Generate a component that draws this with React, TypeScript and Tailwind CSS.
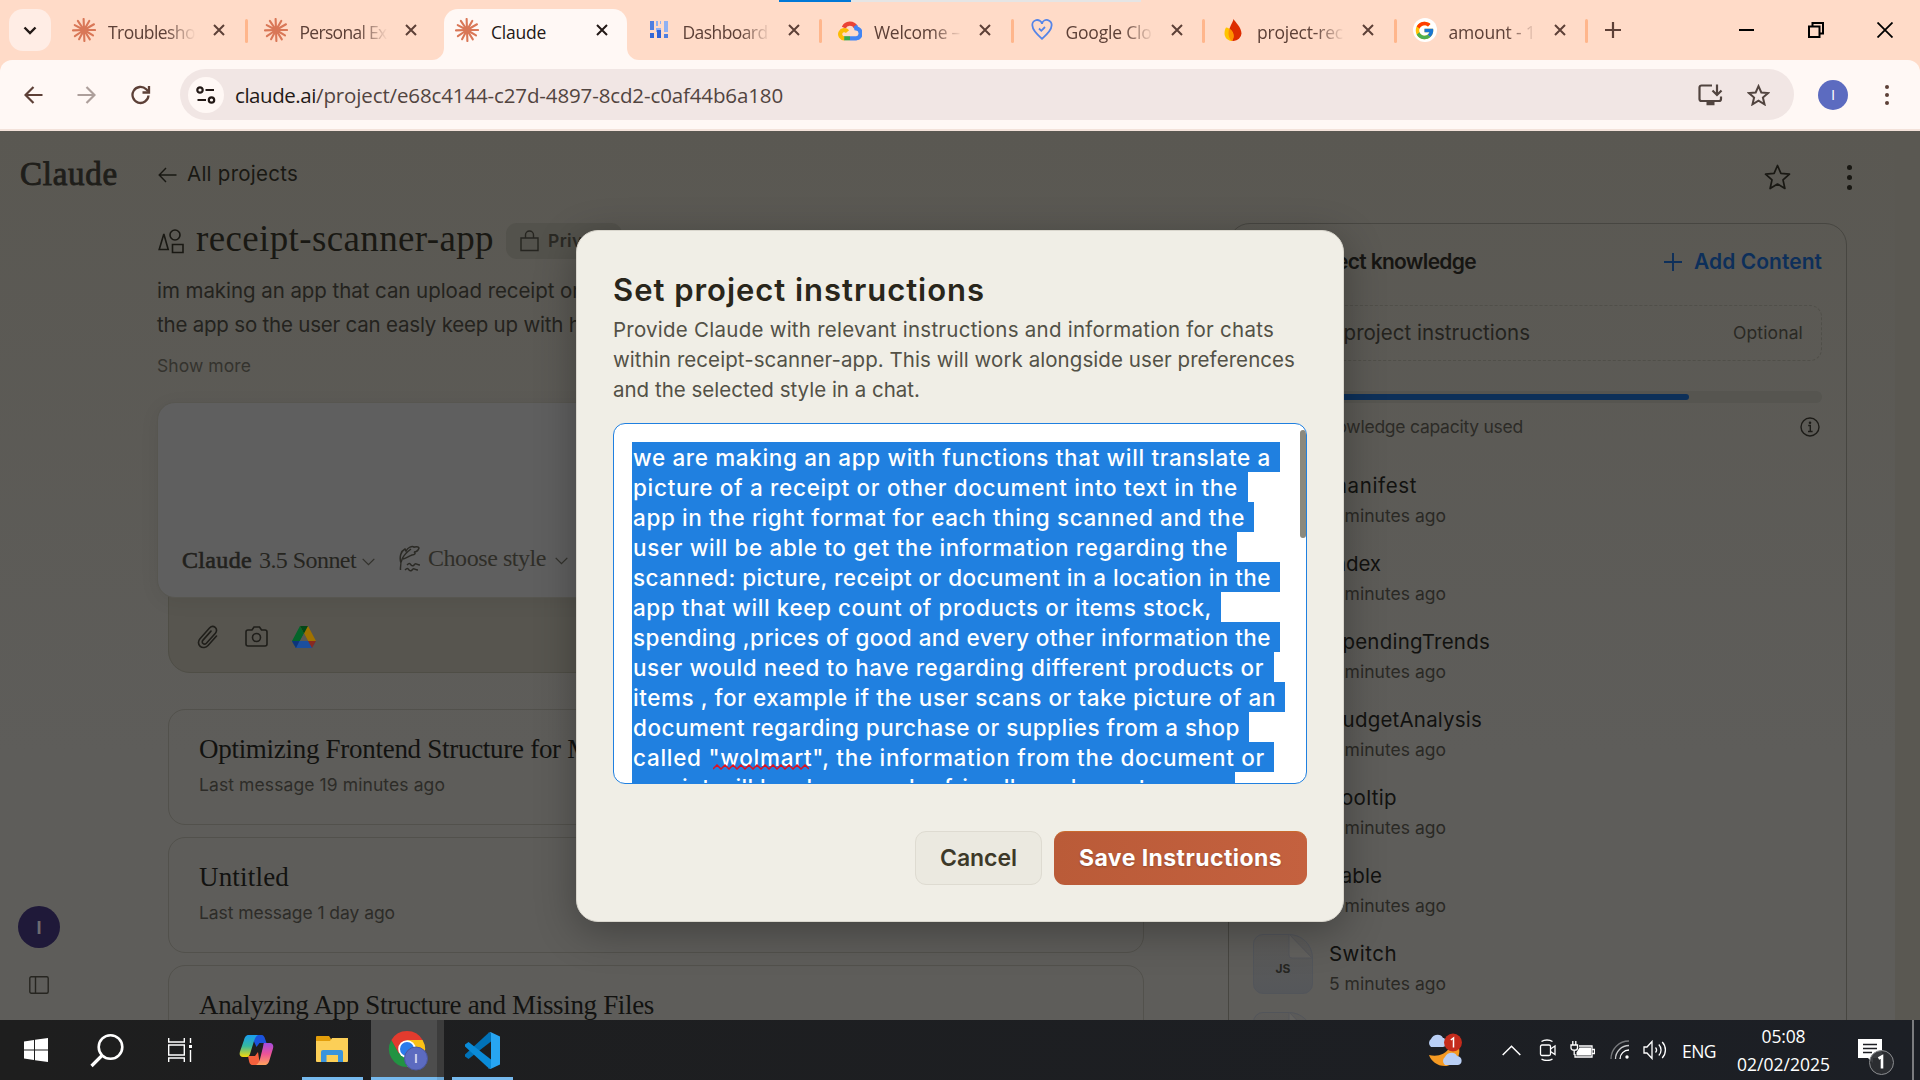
import React, { useLayoutEffect, useRef } from "react";
import { FcGoogle } from "react-icons/fc";

/* A single line of text whose tracking is adjusted so that it fills `w` pixels. */
function Fit({ w, c = "", children }: { w: number; c?: string; children: string }) {
  const ref = useRef<HTMLSpanElement>(null);
  useLayoutEffect(() => {
    const el = ref.current;
    if (!el) return;
    el.style.letterSpacing = "0px";
    const natural = el.getBoundingClientRect().width;
    el.style.letterSpacing = `${(w - natural) / children.length}px`;
  }, [w, children]);
  return (
    <span ref={ref} className={"inline-block whitespace-nowrap " + c}>
      {children}
    </span>
  );
}

const SERIF = "font-['Liberation_Serif',serif]";
const UI = "font-['Open_Sans','Noto_Sans',sans-serif]";

function Burst() {
  const rays = [
    [0, 11], [31, 10.5], [58, 11], [88, 11], [118, 10.5], [146, 11],
    [178, 11], [208, 10.5], [236, 11], [268, 11], [300, 10.5], [330, 11.5],
  ];
  return (
    <svg width="24" height="24" viewBox="-12 -12 24 24" stroke="#d97757" strokeWidth="2.1" strokeLinecap="round">
      {rays.map(([a, r]) => (
        <line key={a} x1="0" y1="0" x2={r * Math.cos((a * Math.PI) / 180)} y2={r * Math.sin((a * Math.PI) / 180)} />
      ))}
      <circle r="3.6" fill="#d97757" stroke="none" />
    </svg>
  );
}

function DashIcon() {
  return (
    <svg width="20" height="20" viewBox="0 0 20 20">
      <path d="M1 1h4v9H1z" fill="#4f7fe0" />
      <path d="M1 13h4v5H1z" fill="#3367d6" />
      <path d="M7 1h2v5H7zM11 1h1v3h-1zM7 8h5v4H7z" fill="#8fb1f3" />
      <path d="M8 10h4v8H8z" fill="#2f63d8" />
      <path d="M15 1h4v11h-4z" fill="#8fb1f3" />
      <path d="M15 14h4v4h-4z" fill="#4f7fe0" />
    </svg>
  );
}

function CloudIcon() {
  return (
    <svg width="25" height="21" viewBox="0 0 25 21" fill="none" strokeWidth="4.4">
      <path d="M6 7.500A7 7 0 0 1 18.500 7" stroke="#ea4335" />
      <path d="M17.800 5.600A7.500 7.500 0 0 1 19 8.300a5.200 5.200 0 0 1 .2 10.300H12.500" stroke="#4285f4" />
      <path d="M12.500 18.600H6.200" stroke="#34a853" />
      <path d="M6.500 18.600A4.300 4.300 0 1 1 9.900 11.600" stroke="#fbbc05" />
    </svg>
  );
}

function HeartIcon() {
  return (
    <svg width="22" height="22" viewBox="0 0 22 22" fill="none" stroke="#5585e8" strokeWidth="1.800">
      <path d="M11 19.800C5 14.500 1.500 10.800 1.500 7A4.800 4.800 0 0 1 11 4.800 4.800 4.800 0 0 1 20.500 7c0 3.800-3.500 7.500-9.500 12.800z" />
      <path d="M8 9.500l2.300 2.300L14 8" />
    </svg>
  );
}

function FireIcon() {
  return (
    <svg width="20" height="24" viewBox="0 0 20 24">
      <path d="M10.500 1C12 4 18.500 9 18.500 15.500a8 8 0 0 1-8 7.500C8 23 6 20 6 14c0-5 3.500-8.500 4.500-13z" fill="#dd2c00" />
      <path d="M3 9.500c4 .5 7.500 4 7.500 8.500 0 2.500-.8 4-2 5C4 22.500 1.500 19 1.500 15.500 1.500 13 2 11 3 9.500z" fill="#ffc400" />
      <path d="M6 10.800c3 1.400 4.600 4.200 4.600 7.200 0 2.200-.8 4-2 5C6.500 21 5.500 18 5.500 15z" fill="#ff9100" />
    </svg>
  );
}

function CloseX({ color }: { color: string }) {
  return (
    <svg width="12" height="12" viewBox="0 0 12 12" stroke={color} strokeWidth="2">
      <path d="M1 1l10 10M11 1L1 11" />
    </svg>
  );
}

const TABS: { icon: React.ReactNode; label: string; w: number; active?: boolean; sep?: boolean }[] = [
  { icon: <Burst />, label: "Troublesho", w: 87, sep: true },
  { icon: <Burst />, label: "Personal Ex", w: 87 },
  { icon: <Burst />, label: "Claude", w: 55, active: true },
  { icon: <DashIcon />, label: "Dashboard", w: 85, sep: true },
  { icon: <CloudIcon />, label: "Welcome –", w: 86, sep: true },
  { icon: <HeartIcon />, label: "Google Clo", w: 86, sep: true },
  { icon: <FireIcon />, label: "project-rec", w: 86, sep: true },
  {
    icon: (
      <span className="flex h-6 w-6 items-center justify-center rounded-full bg-white">
        <FcGoogle size={21} />
      </span>
    ),
    label: "amount - 1",
    w: 87,
    sep: true,
  },
];

function TabStrip() {
  return (
    <div className="relative flex h-[60px] bg-[#ffdbc8]">
      <div className="absolute left-[779px] top-0 flex h-0.5 w-[362px] bg-[#e5e5e5]">
        <div className="h-full w-[72px] bg-[#0078d7]" />
      </div>
      <div className="flex w-14 shrink-0 pl-[9px] pt-[9px]">
        <div className="flex h-[42px] w-[42px] items-center justify-center rounded-[14px] bg-[#ffede5]">
          <svg width="14" height="9" viewBox="0 0 14 9" fill="none" stroke="#231916" strokeWidth="2.400">
            <path d="M1.500 1.500L7 7l5.500-5.500" />
          </svg>
        </div>
      </div>
      {TABS.map((t) => (
        <div key={t.label} className="relative flex h-[60px] w-[191.5px] shrink-0">
          {t.active && (
            <div className="absolute bottom-0 left-[5px] h-[51px] w-[183px] rounded-t-[14px] bg-[#fff8f5]">
              <svg className="absolute -left-3 bottom-0" width="12" height="12">
                <path d="M12 0v12H0A12 12 0 0 0 12 0z" fill="#fff8f5" />
              </svg>
              <svg className="absolute -right-3 bottom-0" width="12" height="12">
                <path d="M0 0v12h12A12 12 0 0 1 0 0z" fill="#fff8f5" />
              </svg>
            </div>
          )}
          <div className="relative flex h-[60px] w-full items-center">
            <div className="ml-4 flex w-6 justify-center">{t.icon}</div>
            <div
              className={
                "ml-3 mt-[3px] w-[88px] overflow-hidden text-[17.500px] leading-6 " +
                UI +
                (t.active
                  ? " text-[#231916]"
                  : " text-[#5d4037] [mask-image:linear-gradient(to_right,black_65%,transparent_100%)]")
              }
            >
              <Fit w={t.w}>{t.label}</Fit>
            </div>
            <div className="ml-[17px]">
              <CloseX color={t.active ? "#231916" : "#5d4037"} />
            </div>
          </div>
          {t.sep && <div className="absolute right-0 top-[19px] h-6 w-[3px] rounded-full bg-[#ffb68c]" />}
        </div>
      ))}
      <div className="ml-[17px] flex items-center">
        <svg width="16" height="16" viewBox="0 0 16 16" stroke="#5d4037" strokeWidth="2.200">
          <path d="M8 0v16M0 8h16" />
        </svg>
      </div>
      <div className="ml-auto flex items-center pr-[27px]">
        <svg width="15" height="15" viewBox="0 0 15 15" stroke="#000" strokeWidth="2">
          <path d="M0 7h15" />
        </svg>
        <svg className="ml-[54px]" width="16" height="16" viewBox="0 0 16 16" fill="none" stroke="#000" strokeWidth="2">
          <path d="M1 4.500h10.500V15H1zM4.500 4V1H15v10.500h-3" />
        </svg>
        <svg className="ml-[53px]" width="16" height="16" viewBox="0 0 16 16" stroke="#000" strokeWidth="1.800">
          <path d="M.5.500l15 15M15.500.500l-15 15" />
        </svg>
      </div>
    </div>
  );
}

function Toolbar() {
  return (
    <div className="h-[71px] bg-[#ffdbc8]">
      <div className="flex h-[71px] items-center rounded-t-[12px] border-b-2 border-[#f3e2da] bg-[#fff8f5]">
        <svg className="ml-6" width="19" height="18" viewBox="0 0 19 18" fill="none" stroke="#5d4037" strokeWidth="2.200">
          <path d="M18.500 9H2M9.500 1L1.500 9l8 8" />
        </svg>
        <svg className="ml-[34px]" width="19" height="18" viewBox="0 0 19 18" fill="none" stroke="#ad9f9b" strokeWidth="2.200">
          <path d="M.5 9H17M9.500 1l8 8-8 8" />
        </svg>
        <svg className="ml-[35px]" width="20" height="20" viewBox="0 0 20 20" fill="none" stroke="#5d4037" strokeWidth="2.300">
          <path d="M17.500 10.500a8 8 0 1 1-2.300-6.200l2 2" />
          <path d="M18 1v6.500h-6.500" />
        </svg>
        <div className="ml-[29px] flex h-[51px] w-[1614px] items-center rounded-full bg-[#f1e6e4]">
          <div className="ml-2 flex h-9 w-9 items-center justify-center rounded-full bg-[#fff8f5]">
            <svg width="20" height="18" viewBox="0 0 20 18" fill="none" stroke="#231916" strokeWidth="2.200">
              <circle cx="4" cy="4" r="2.700" />
              <path d="M9.500 4H18M1.500 14H10" />
              <circle cx="15.500" cy="14" r="2.700" />
            </svg>
          </div>
          <div className={"ml-[11px] text-[20.500px] leading-7 " + UI}>
            <Fit w={81} c="text-[#231916]">claude.ai</Fit>
            <Fit w={467} c="text-[#51443f]">/project/e68c4144-c27d-4897-8cd2-c0af44b6a180</Fit>
          </div>
          <svg className="ml-auto" width="25" height="22" viewBox="0 0 25 22" fill="none" stroke="#51443f" strokeWidth="2.200">
            <path d="M14 1.500H3.500a2 2 0 0 0-2 2V15a2 2 0 0 0 2 2H21a2 2 0 0 0 2-2v-2.500" />
            <path d="M19 .5v10M14.500 6.500l4.500 4.500 4.500-4.500" />
            <path d="M8.500 19.500h8" strokeWidth="3.500" />
          </svg>
          <svg className="ml-[24px] mr-[24px]" width="23" height="22" viewBox="0 0 23 22" fill="none" stroke="#51443f" strokeWidth="2">
            <path d="M11.500 2.200l2.800 6.300 6.800.6-5.200 4.500 1.600 6.700-6-3.600-6 3.600 1.600-6.700L1.900 9.100l6.800-.6z" />
          </svg>
        </div>
        <div className={"ml-6 flex h-[30px] w-[30px] items-center justify-center rounded-full bg-[#5c6bc0] text-[15px] text-white " + UI}>I</div>
        <div className="ml-[37px] flex flex-col gap-1">
          <i className="h-1 w-1 rounded-full bg-[#5d4037]" />
          <i className="h-1 w-1 rounded-full bg-[#5d4037]" />
          <i className="h-1 w-1 rounded-full bg-[#5d4037]" />
        </div>
      </div>
    </div>
  );
}

const CHATS = [
  { title: "Optimizing Frontend Structure for M", tw: 392, sub: "Last message 19 minutes ago", sw: 246 },
  { title: "Untitled", tw: 90, sub: "Last message 1 day ago", sw: 196 },
  { title: "Analyzing App Structure and Missing Files", tw: 455, sub: "Last message 2 days ago", sw: 206 },
];

const FILES = [
  { name: "manifest", w: 88 },
  { name: "index", w: 52 },
  { name: "SpendingTrends", w: 161 },
  { name: "BudgetAnalysis", w: 153 },
  { name: "Tooltip", w: 68 },
  { name: "Table", w: 53 },
  { name: "Switch", w: 68 },
  { name: "Slider", w: 60 },
];

function Chevron({ c = "" }: { c?: string }) {
  return (
    <svg className={c} width="13" height="8" viewBox="0 0 13 8" fill="none" stroke="#33322d" strokeWidth="1.300">
      <path d="M.7.900l5.800 5.800L12.300.900" />
    </svg>
  );
}

function FileIcon() {
  return (
    <div className="relative flex h-[60px] w-[60px] shrink-0 items-center justify-center rounded-[10px] rounded-tr-[24px] border border-[#52555a] bg-gradient-to-b from-[#5c5b59] to-[#55575a]">
      <svg className="absolute -right-px -top-px" width="26" height="26" viewBox="0 0 26 26">
        <path d="M2 0v21a3 3 0 0 0 3 3h20z" fill="#62615e" stroke="#55565a" />
      </svg>
      <span className="mt-[9px] text-[12px] font-bold leading-none text-[#262622]">JS</span>
    </div>
  );
}

function MainColumn() {
  return (
    <div className="ml-[29px] w-[998px]">
      <div className="flex h-[87px] items-center">
        <svg className="ml-px" width="19" height="16" viewBox="0 0 19 16" fill="none" stroke="#191813" strokeWidth="1.400">
          <path d="M18.500 8H1.500M8 1L1.200 8 8 15" />
        </svg>
        <Fit w={111} c="ml-[10px] text-[20.500px] text-[#191813]">All projects</Fit>
      </div>
      <div className="mt-px flex h-[44px] items-center">
        <svg className="ml-px" width="26" height="26" viewBox="0 0 26 26" fill="none" stroke="#191813" strokeWidth="1.600">
          <path d="M5.700 6.500L1.200 21.500h9L6 6.500z" />
          <circle cx="17" cy="7" r="5" />
          <path d="M14.500 16.500h10.500v8H14.500z" />
        </svg>
        <Fit w={298} c={"ml-[12px] text-[37px] leading-[44px] text-[#191813] -mt-1 " + SERIF}>receipt-scanner-app</Fit>
        <div className="ml-3 flex h-9 w-[116px] items-center rounded-[11px] bg-[#53524c]">
          <svg className="ml-[14px]" width="19" height="22" viewBox="0 0 19 22" fill="none" stroke="#262520" strokeWidth="1.400">
            <path d="M1 8h17v12.500H1zM5.500 8V5a4 4 0 0 1 8 0v3" />
          </svg>
          <Fit w={62} c="ml-[9px] text-[17.500px] font-semibold text-[#2a2924]">Private</Fit>
        </div>
      </div>
      <div className="mt-[11px] text-[20.500px] leading-[34px] text-[#24231e]">
        <div><Fit w={423}>im making an app that can upload receipt or</Fit></div>
        <div><Fit w={439}>the app so the user can easly keep up with his</Fit></div>
      </div>
      <div className="mt-[12px] text-[17.500px] leading-6 text-[#34332e]">
        <Fit w={94}>Show more</Fit>
      </div>
      <div className="relative mt-[24px] flex h-[196px] flex-col justify-end rounded-[18px] border border-[#575650] bg-[#5f5f5f] shadow-[0_4px_20px_rgba(0,0,0,0.06)]">
        <div className={"mb-[22px] flex h-[34px] items-center pl-6 text-[24px] leading-[34px] " + SERIF}>
          <Fit w={70} c="mt-1 text-[#22211d] [-webkit-text-stroke:0.6px_#22211d]">Claude</Fit>
          <Fit w={97} c="ml-[7px] mt-1 text-[#26251f]">3.5 Sonnet</Fit>
          <Chevron c="ml-[6px] mt-[7px]" />
          <svg className="ml-[24px]" width="22" height="28" viewBox="0 0 22 28" fill="none" stroke="#2b2a25" strokeWidth="1.500">
            <path d="M1.500 26C1 16 4 11 12 5M2 19c-2-6 0-12 4-14l1 2c2-4 6-5 8-4-1 1 4-2 5 1-1 3-2 4-5 4 2 1 1 3-2 3-3 1-5 3-9 4M8 21c2-2 3-2 4 0 2 2 3 0 4-1s2 1 5 1M6 26c2-2 3-2 4 0 2 2 3 0 4-1s2 1 5 1" />
          </svg>
          <Fit w={118} c="ml-[7px] text-[#2f2e28]">Choose style</Fit>
          <Chevron c="ml-[9px] mt-[5px]" />
        </div>
      </div>
      <div className="ml-[11px] mt-[-12px] flex h-[87px] w-[976px] items-center rounded-b-[22px] border border-[#4f4e46] bg-[#57554f] pl-[28px] pt-[14px]">
        <svg width="21" height="24" viewBox="0 0 21 24" fill="none" stroke="#1f1e1a" strokeWidth="1.600" strokeLinecap="round">
          <path d="M19.500 11l-8.500 9.500c-2 2.200-5.500 2.800-7.800.8s-2.200-5.300-.2-7.500L12.500 3c1.600-1.700 4-2 5.700-.600s1.800 4 .2 5.800l-9 10c-1 1-2.400 1.200-3.400.3s-1-2.300 0-3.400l8-9" />
        </svg>
        <svg className="ml-[27px]" width="23" height="22" viewBox="0 0 23 22" fill="none" stroke="#1f1e1a" strokeWidth="1.600">
          <path d="M3 4h4l2-3h5.500l2 3H20a2 2 0 0 1 2 2v12a2 2 0 0 1-2 2H3a2 2 0 0 1-2-2V6a2 2 0 0 1 2-2z" />
          <circle cx="11.500" cy="11.500" r="4" />
        </svg>
        <svg className="ml-[24px]" width="24" height="22" viewBox="0 0 24 22">
          <path d="M8 0h8l8 15h-8z" fill="#a07200" />
          <path d="M8 0L0 15l4 7 8-14.500z" fill="#04652a" />
          <path d="M8 0h8l-4 7.500z" fill="#034718" />
          <path d="M0 15h24l-4 7H4z" fill="#1c4f9e" />
          <path d="M0 15h7.500L4 22z" fill="#0c357a" />
          <path d="M16 15h8l-4 7z" fill="#8a2a20" />
          <path d="M12 7.500L16 15H8z" fill="#5a5953" />
        </svg>
      </div>
      <div className="ml-[11px] mt-[36px] flex flex-col gap-3">
        {CHATS.map((c) => (
          <div key={c.title} className="h-[116px] w-[976px] shrink-0 rounded-[17px] border border-[#52514c] pl-[30px] pt-[22px]">
            <div className={"text-[27px] leading-[34px] text-[#121210] " + SERIF}>
              <Fit w={c.tw}>{c.title}</Fit>
            </div>
            <div className="mt-[7px] text-[17.500px] leading-6 text-[#2d2c28]">
              <Fit w={c.sw}>{c.sub}</Fit>
            </div>
          </div>
        ))}
      </div>
    </div>
  );
}

function SidePanel() {
  return (
    <div className="ml-[73px] w-[619px]">
      <div className="flex h-[92px] items-center justify-end">
        <svg width="27" height="27" viewBox="0 0 27 27" fill="none" stroke="#191813" strokeWidth="1.700" strokeLinejoin="round">
          <path d="M13.500 1.500l3.400 7.900 8.600.8-6.500 5.700 1.900 8.600-7.400-4.500-7.400 4.500L8 15.900 1.500 10.200l8.600-.8z" />
        </svg>
        <div className="ml-[56px] mr-[-5px] flex flex-col gap-[5px]">
          <i className="h-[5px] w-[5px] rounded-full bg-[#191813]" />
          <i className="h-[5px] w-[5px] rounded-full bg-[#191813]" />
          <i className="h-[5px] w-[5px] rounded-full bg-[#191813]" />
        </div>
      </div>
      <div className="h-[900px] rounded-[22px] border border-[#474641] px-6">
        <div className="mt-[23px] flex h-[30px] items-center justify-between">
          <Fit w={177} c="ml-[46px] text-[21px] font-semibold text-[#161512]">Project knowledge</Fit>
          <div className="flex items-center text-[#0d2f5a]">
            <svg width="18" height="18" viewBox="0 0 18 18" stroke="currentColor" strokeWidth="1.900">
              <path d="M9 0v18M0 9h18" />
            </svg>
            <Fit w={128} c="ml-3 text-[21px] font-semibold">Add Content</Fit>
          </div>
        </div>
        <div className="mt-[28px] flex h-[56px] items-center justify-between rounded-[12px] border border-dashed border-[#504f49] pl-[52px] pr-[18px]">
          <Fit w={224} c="text-[20.500px] text-[#24231e]">Set project instructions</Fit>
          <Fit w={70} c="text-[17.500px] text-[#2a2924]">Optional</Fit>
        </div>
        <div className="mt-[30px] flex h-3 items-center rounded-full bg-[#565550]">
          <div className="h-1.5 w-[436px] rounded-full bg-[#0d3059]" />
        </div>
        <div className="mt-[12px] flex h-6 items-center justify-between pr-0.5">
          <Fit w={206} c="ml-[64px] text-[17.500px] text-[#2c2b27]">knowledge capacity used</Fit>
          <svg width="20" height="20" viewBox="0 0 20 20" fill="none" stroke="#1d1c18" strokeWidth="1.400">
            <circle cx="10" cy="10" r="9" />
            <path d="M8.200 8.500H10.300V14.500M8 14.500h4.600" />
            <circle cx="10" cy="5.800" r=".6" fill="#1d1c18" />
          </svg>
        </div>
        <div className="mt-[27px] flex flex-col">
          {FILES.map((f) => (
            <div key={f.name} className="flex h-[78px] shrink-0">
              <FileIcon />
              <div className="ml-4 mt-[5px]">
                <div className="text-[20.500px] leading-[30px] text-[#121210]">
                  <Fit w={f.w}>{f.name}</Fit>
                </div>
                <div className="text-[17.500px] leading-[30px] text-[#2a2925]">
                  <Fit w={117}>5 minutes ago</Fit>
                </div>
              </div>
            </div>
          ))}
        </div>
      </div>
    </div>
  );
}

const LINES = [
  { t: "we are making an app with functions that will translate a", w: 638, s: 648 },
  { t: "picture of a receipt or other document into text in the", w: 605, s: 616 },
  { t: "app in the right format for each thing scanned and the", w: 612, s: 622 },
  { t: "user will be able to get the information regarding the", w: 595, s: 605 },
  { t: "scanned: picture, receipt or document in a location in the", w: 638, s: 648 },
  { t: "app that will keep count of products or items stock,", w: 579, s: 589 },
  { t: "spending ,prices of good and every other information the", w: 638, s: 648 },
  { t: "user would need to have regarding different products or", w: 631, s: 642 },
  { t: "items , for example if the user scans or take picture of an", w: 643, s: 653 },
  { t: "document regarding purchase or supplies from a shop", w: 607, s: 617 },
  { t: "called \"wolmart\", the information from the document or", w: 632, s: 642 },
  { t: "receipt will be shown under friendly and smart names", w: 593, s: 603 },
];

function Modal() {
  return (
    <div className="absolute left-[576px] top-[99px] h-[692px] w-[768px] rounded-[22px] border border-[#d9d6cd] bg-[#f0eee6] px-9 pt-[37px] shadow-[0_10px_40px_rgba(0,0,0,0.300)]">
      <div className="text-[31px] font-semibold leading-[44px] text-[#29261b]">
        <Fit w={372}>Set project instructions</Fit>
      </div>
      <div className="mt-[3px] text-[20.500px] leading-[30px] text-[#535146]">
        <div><Fit w={661}>Provide Claude with relevant instructions and information for chats</Fit></div>
        <div><Fit w={682}>within receipt-scanner-app. This will work alongside user preferences</Fit></div>
        <div><Fit w={307}>and the selected style in a chat.</Fit></div>
      </div>
      <div className="relative mt-[18px] h-[361px] w-[694px] overflow-hidden rounded-[12px] border border-[#2080e0] bg-white pl-[18px] pt-[18px]">
        {LINES.map((l) => (
          <div key={l.t} className="h-[30px] bg-[#2080e0] pl-px text-[22.500px] font-medium leading-[31px] text-white" style={{ width: l.s }}>
            <Fit w={l.w}>{l.t}</Fit>
          </div>
        ))}
        <svg className="absolute left-[99px] top-[340px]" width="96" height="6" fill="none" stroke="#e01020" strokeWidth="1.500">
          <path d="M0 5l4-4 4 4 4-4 4 4 4-4 4 4 4-4 4 4 4-4 4 4 4-4 4 4 4-4 4 4 4-4 4 4 4-4 4 4 4-4 4 4 4-4 4 4 4-4 4 4" />
        </svg>
        <div className="absolute right-0 top-[6px] h-[108px] w-[6px] rounded-full bg-[#8b897d]" />
      </div>
      <div className="mt-[47px] flex justify-end gap-3">
        <div className="flex h-[54px] w-[127px] items-center justify-center rounded-[11px] border border-[#dedbd1] bg-[#ebe9e0] text-[23px] font-semibold text-[#3d3929]">
          <Fit w={77}>Cancel</Fit>
        </div>
        <div className="flex h-[54px] w-[253px] items-center justify-center rounded-[11px] border-t border-[#c96a2e] bg-gradient-to-r from-[#ba5b38] to-[#c4613f] text-[23px] font-bold text-white [text-shadow:0_1px_2px_rgba(0,0,0,0.250)]">
          <Fit w={203}>Save Instructions</Fit>
        </div>
      </div>
    </div>
  );
}

function ClaudePage() {
  return (
    <div className="relative h-[889px] overflow-hidden bg-gradient-to-b from-[#5a5852] to-[#5e5d5a] to-70% font-['Inter',sans-serif]">
      <div className="absolute right-0 top-0 h-full w-[25px] bg-[#5a5852]" />
      <div className="flex h-full">
        <div className="flex w-[128px] shrink-0 flex-col">
          <div className="flex h-[88px] items-center pl-5">
            <Fit w={98} c={"text-[33px] text-[#1f1e1a] [-webkit-text-stroke:0.900px_#1f1e1a] " + SERIF}>Claude</Fit>
          </div>
          <div className="mt-auto flex flex-col items-center pb-[26px] pr-[50px]">
            <div className="flex h-[42px] w-[42px] items-center justify-center rounded-full bg-[#1f1939] text-[18px] font-bold text-[#6d6b70]">I</div>
            <svg className="mt-[28px]" width="20" height="18" viewBox="0 0 20 18" fill="none" stroke="#262520" strokeWidth="1.400">
              <rect x=".8" y=".8" width="18.400" height="16.400" rx="1.500" />
              <path d="M6.500 1v16" />
            </svg>
          </div>
        </div>
        <MainColumn />
        <SidePanel />
      </div>
      <Modal />
    </div>
  );
}

function Taskbar() {
  return (
    <div className={"flex h-[60px] bg-gradient-to-r from-[#1e1e1e] to-[#1c1f25] text-white " + UI}>
      <div className="flex w-[302px] shrink-0 items-center pl-6">
        <svg width="24" height="24" viewBox="0 0 24 24" fill="#fff">
          <path d="M0 3.400L10 2v9.500H0zM11 1.800L24 0v11.500H11zM0 12.500h10V22L0 20.600zM11 12.500h13V24l-13-1.800z" />
        </svg>
        <svg className="ml-[42px]" width="35" height="35" viewBox="0 0 35 35" fill="none" stroke="#fff" strokeWidth="2.600">
          <circle cx="20.500" cy="14" r="11.800" />
          <path d="M12 22.500L1.500 33" strokeWidth="3.200" />
        </svg>
        <svg className="ml-[43px]" width="25" height="24" viewBox="0 0 25 24" fill="none" stroke="#fff" strokeWidth="1.400">
          <path d="M.7 0v4h15.600V0M.7 7h15.600v10H.7zM.7 24v-4h15.600v4M22.500 0v5M22.500 12v12" />
          <path d="M21 7h3v3h-3z" fill="#fff" stroke="none" />
        </svg>
        <svg className="ml-[46px]" width="35" height="32" viewBox="0 0 35 32">
          <defs>
            <linearGradient id="cpA" x1="0" y1="0" x2="0" y2="1">
              <stop offset="0" stopColor="#1a9df0" />
              <stop offset=".5" stopColor="#35b8a0" />
              <stop offset="1" stopColor="#f5d90a" />
            </linearGradient>
            <linearGradient id="cpB" x1="0" y1="0" x2="0" y2="1">
              <stop offset="0" stopColor="#a34be0" />
              <stop offset=".5" stopColor="#ee5396" />
              <stop offset="1" stopColor="#ffa45c" />
            </linearGradient>
          </defs>
          <path d="M12 1h10c3 0 3.500 2 4.500 5l1 3h-7l-3 4z" fill="#1b53dc" />
          <path d="M9 22h7l3-4 2 13H14c-3 0-3.500-2-4-4z" fill="#f4603c" />
          <path d="M10 1h9c-2 1-3 3-4 6l-4 13c-1 2.500-2 3-4 3H4c-3 0-4-2-3-5.500L5 6c1-3.500 2-5 5-5z" fill="url(#cpA)" />
          <path d="M25 9h5c3.500 0 5 2 4 5.500L30.500 26c-1 3.500-2 5-5 5H17c2-1 3-3 4-6l3-12c.5-2.500.5-4 1-4z" fill="url(#cpB)" />
        </svg>
      </div>
      <div className="relative flex w-[61px] shrink-0 items-center justify-center border-b-[3px] border-[#76b9ed]">
        <svg width="33" height="28" viewBox="0 0 33 28">
          <path d="M0 2a1 1 0 0 1 1-1h12l2 3v4H0z" fill="#e39e0a" />
          <path d="M0 6h14l2-3h16v23a1 1 0 0 1-1 1H1a1 1 0 0 1-1-1z" fill="#fccf57" />
          <path d="M5 27V17a2 2 0 0 1 2-2h18a2 2 0 0 1 2 2v10h-5v-7H10.500v7z" fill="#3a94dc" />
        </svg>
      </div>
      <div className="ml-2 flex w-[66px] shrink-0 items-center justify-center border-b-[3px] border-[#76b9ed] bg-[#4d4d4d] pl-[7px] pt-[3px]">
        <svg width="40" height="42" viewBox="0 0 40 42">
          <path d="M19 11h15.600A18 18 0 0 1 19 38l7.800-13.500z" fill="#fbc116" />
          <path d="M3.400 11L11 24.500 26.800 24.500 19 38A18 18 0 0 1 3.400 11z" fill="#229342" />
          <path d="M3.400 11A18 18 0 0 1 34.600 11H19l-8 13.500z" fill="#e33b2e" />
          <circle cx="19" cy="20" r="8.800" fill="#fff" />
          <circle cx="19" cy="20" r="7" fill="#2a7bec" />
          <circle cx="28" cy="29.500" r="11.500" fill="#5c6bc0" stroke="#4b579f" />
          <path d="M28 25v9" stroke="#c6cbe8" strokeWidth="2.200" />
        </svg>
      </div>
      <div className="w-[7px] shrink-0 border-b-[3px] border-[#6aa6d4] bg-[#3c3c3c]" />
      <div className="ml-2 flex w-[61px] shrink-0 items-center justify-center border-b-[3px] border-[#76b9ed] pt-[3px]">
        <svg width="37" height="37" viewBox="0 0 37 37">
          <path d="M27 9.500L4.500 27 1 24.500v-2L25 .5l3 1z" fill="#0072b8" />
          <path d="M27 27.500L4.500 10 1 12.500v2l24 22 3-1z" fill="#0a8bd8" />
          <path d="M26.500 0L36 4.500v28L26.500 37c-1.500.3-2 0-2.500-.5 1.500.5 3-.3 3-1.500V2c0-1.500-1.500-2-3-1.500.5-.5 1.500-.8 2.500-.5z" fill="#27a5f2" />
        </svg>
      </div>
      <div className="ml-auto flex items-center">
        <svg width="37" height="35" viewBox="0 0 37 35">
          <path d="M3 22c8 2 16 0 21-8l9 1c2 9-5 18-14 18-8 0-14-5-16-11z" fill="#f59a23" />
          <path d="M5 14a5 5 0 0 1 0-8C7 1 15 0 17 5c4 0 5 9 0 9z" fill="#b9cff5" />
          <path d="M19 32a5 5 0 0 1 0-8c2-5 10-6 12-1 6 0 6 9 1 9z" fill="#b9cff5" />
          <circle cx="27" cy="9.500" r="9" fill="#c42b1c" />
          <path d="M24.800 7l2.700-2v9.500" stroke="#fff" strokeWidth="1.500" fill="none" />
        </svg>
        <svg className="ml-[39px]" width="19" height="11" viewBox="0 0 19 11" fill="none" stroke="#fff" strokeWidth="1.500">
          <path d="M.7 10L9.500 1.200 18.300 10" />
        </svg>
        <svg className="ml-[18px]" width="18" height="22" viewBox="0 0 18 22" fill="none" stroke="#fff" strokeWidth="1.300">
          <rect x="1.500" y="6" width="10" height="10.500" rx="1.500" />
          <path d="M11.500 10l4.500-3v8.500l-4.500-3M2.500 2.500c3-2 8-2 11 0M2.500 20c3 2 8 2 11 0" />
        </svg>
        <svg className="ml-[13px]" width="25" height="18" viewBox="0 0 25 18" fill="none" stroke="#fff" strokeWidth="1.300">
          <path d="M9 5h13v11H5v-3M22.500 8.500h2v4h-2" />
          <path d="M9.500 6.500H21v8H6.500v-3z" fill="#fff" stroke="none" />
          <path d="M1 4h6.500v3c0 3-6.500 3-6.500 0zM2.800 4V0M5.800 4V0M4.200 9v5" />
        </svg>
        <svg className="ml-[15px]" width="20" height="20" viewBox="0 0 20 20" fill="none" strokeWidth="1.300">
          <path d="M1 19A18 18 0 0 1 19 1" stroke="#77797c" />
          <path d="M5.500 19A13.500 13.500 0 0 1 19 5.500" stroke="#c9cacc" />
          <path d="M10 19a9 9 0 0 1 9-9" stroke="#fff" />
          <circle cx="17" cy="17" r="1.700" fill="#fff" />
        </svg>
        <svg className="ml-[13px]" width="24" height="20" viewBox="0 0 24 20" fill="none" stroke="#fff" strokeWidth="1.300">
          <path d="M1 7h3l5-5.500v17L4 13H1zM12.500 7.500c1.300 1.500 1.300 3.500 0 5M15.800 4.500c3 3.200 3 7.800 0 11M19.200 2c4.300 4.500 4.300 11.500 0 16" />
        </svg>
        <Fit w={34} c="ml-[15px] mt-0.5 text-[17.500px]">ENG</Fit>
        <div className="ml-[20px] flex w-[95px] flex-col items-center text-[17.500px] leading-[28px]">
          <Fit w={44}>05:08</Fit>
          <Fit w={93}>02/02/2025</Fit>
        </div>
        <svg className="ml-[27px] mt-[13px]" width="38" height="38" viewBox="0 0 38 38">
          <path d="M0 1h24v19h-9v5l-5-5H0z" fill="#fff" />
          <path d="M5 6.500h14M5 10.500h14M5 14.500h9" stroke="#1d1f24" strokeWidth="1.400" />
          <circle cx="23.500" cy="24.500" r="12" fill="#2c2e33" fillOpacity=".93" stroke="#8b8d90" />
          <path d="M20.500 20.500l3.500-2v12" stroke="#fff" strokeWidth="2.600" fill="none" />
        </svg>
        <div className="ml-[16px] mr-[6px] h-[60px] w-[2px] bg-[#7b7c7f]" />
      </div>
    </div>
  );
}

export default function App() {
  return (
    <div className="flex h-[1080px] w-[1920px] flex-col overflow-hidden">
      <TabStrip />
      <Toolbar />
      <ClaudePage />
      <Taskbar />
    </div>
  );
}
